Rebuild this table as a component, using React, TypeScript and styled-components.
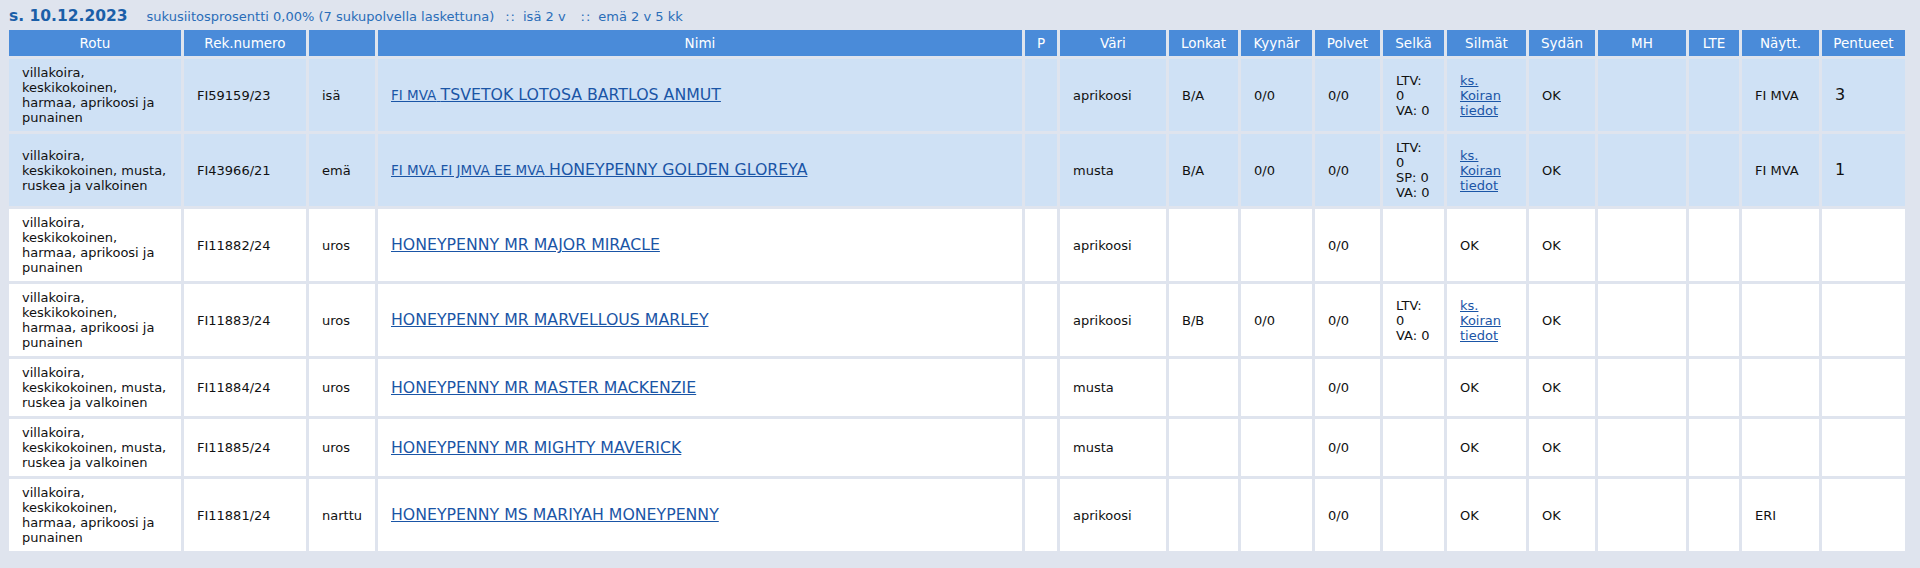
import React from "react";
import styled, { createGlobalStyle } from "styled-components";

interface Dog {
  rotu: string;
  rek: string;
  rooli: string;
  titles?: string;
  nimi: string;
  p?: string;
  vari: string;
  lonkat?: string;
  kyynar?: string;
  polvet?: string;
  selka?: string[];
  silmat?: string;
  silmatLink?: boolean;
  sydan?: string;
  mh?: string;
  lte?: string;
  naytt?: string;
  pentueet?: string;
  parent?: boolean;
}

const HARMAA = "villakoira, keskikokoinen, harmaa, aprikoosi ja punainen";
const MUSTA = "villakoira, keskikokoinen, musta, ruskea ja valkoinen";

const dogs: Dog[] = [
  {
    rotu: HARMAA,
    rek: "FI59159/23",
    rooli: "isä",
    titles: "FI MVA",
    nimi: "TSVETOK LOTOSA BARTLOS ANMUT",
    vari: "aprikoosi",
    lonkat: "B/A",
    kyynar: "0/0",
    polvet: "0/0",
    selka: ["LTV:", "0", "VA: 0"],
    silmatLink: true,
    sydan: "OK",
    naytt: "FI MVA",
    pentueet: "3",
    parent: true,
  },
  {
    rotu: MUSTA,
    rek: "FI43966/21",
    rooli: "emä",
    titles: "FI MVA FI JMVA EE MVA",
    nimi: "HONEYPENNY GOLDEN GLOREYA",
    vari: "musta",
    lonkat: "B/A",
    kyynar: "0/0",
    polvet: "0/0",
    selka: ["LTV:", "0", "SP: 0", "VA: 0"],
    silmatLink: true,
    sydan: "OK",
    naytt: "FI MVA",
    pentueet: "1",
    parent: true,
  },
  {
    rotu: HARMAA,
    rek: "FI11882/24",
    rooli: "uros",
    nimi: "HONEYPENNY MR MAJOR MIRACLE",
    vari: "aprikoosi",
    polvet: "0/0",
    silmat: "OK",
    sydan: "OK",
  },
  {
    rotu: HARMAA,
    rek: "FI11883/24",
    rooli: "uros",
    nimi: "HONEYPENNY MR MARVELLOUS MARLEY",
    vari: "aprikoosi",
    lonkat: "B/B",
    kyynar: "0/0",
    polvet: "0/0",
    selka: ["LTV:", "0", "VA: 0"],
    silmatLink: true,
    sydan: "OK",
  },
  {
    rotu: MUSTA,
    rek: "FI11884/24",
    rooli: "uros",
    nimi: "HONEYPENNY MR MASTER MACKENZIE",
    vari: "musta",
    polvet: "0/0",
    silmat: "OK",
    sydan: "OK",
  },
  {
    rotu: MUSTA,
    rek: "FI11885/24",
    rooli: "uros",
    nimi: "HONEYPENNY MR MIGHTY MAVERICK",
    vari: "musta",
    polvet: "0/0",
    silmat: "OK",
    sydan: "OK",
  },
  {
    rotu: HARMAA,
    rek: "FI11881/24",
    rooli: "narttu",
    nimi: "HONEYPENNY MS MARIYAH MONEYPENNY",
    vari: "aprikoosi",
    polvet: "0/0",
    silmat: "OK",
    sydan: "OK",
    naytt: "ERI",
  },
];

const columns: { title: string; width: number }[] = [
  { title: "Rotu", width: 172 },
  { title: "Rek.numero", width: 122 },
  { title: "", width: 66 },
  { title: "Nimi", width: 644 },
  { title: "P", width: 32 },
  { title: "Väri", width: 106 },
  { title: "Lonkat", width: 69 },
  { title: "Kyynär", width: 71 },
  { title: "Polvet", width: 65 },
  { title: "Selkä", width: 61 },
  { title: "Silmät", width: 79 },
  { title: "Sydän", width: 66 },
  { title: "MH", width: 88 },
  { title: "LTE", width: 50 },
  { title: "Näytt.", width: 77 },
  { title: "Pentueet", width: 83 },
];

const App: React.FC = () => {
  return (
    <Page>
      <GlobalStyle />
      <TitleBar>
        <DateTitle>s. 10.12.2023</DateTitle>
        <Info>
          sukusiitosprosentti 0,00% (7 sukupolvella laskettuna)
          <Sep $before={11}>::</Sep>isä 2 v<Sep $before={15}>::</Sep>emä 2 v 5 kk
        </Info>
      </TitleBar>

      <Table>
        <colgroup>
          {columns.map((c, i) => (
            <Col key={i} $w={c.width} />
          ))}
        </colgroup>
        <thead>
          <tr>
            {columns.map((c, i) => (
              <Th key={i}>{c.title}</Th>
            ))}
          </tr>
        </thead>
        <tbody>
          {dogs.map((d) => (
            <tr key={d.rek}>
              <Td $parent={d.parent}>{d.rotu}</Td>
              <Td $parent={d.parent}>{d.rek}</Td>
              <Td $parent={d.parent}>{d.rooli}</Td>
              <Td $parent={d.parent}>
                <NameLink href="#">
                  {d.titles && <Titles>{d.titles} </Titles>}
                  {d.nimi}
                </NameLink>
              </Td>
              <Td $parent={d.parent}>{d.p}</Td>
              <Td $parent={d.parent}>{d.vari}</Td>
              <Td $parent={d.parent}>{d.lonkat}</Td>
              <Td $parent={d.parent}>{d.kyynar}</Td>
              <Td $parent={d.parent}>{d.polvet}</Td>
              <Td $parent={d.parent}>
                {d.selka?.map((line, i) => (
                  <Line key={i}>{line}</Line>
                ))}
              </Td>
              <Td $parent={d.parent}>
                {d.silmatLink ? (
                  <SmallLink href="#">
                    <Line>ks.</Line>
                    <Line>Koiran</Line>
                    <Line>tiedot</Line>
                  </SmallLink>
                ) : (
                  d.silmat
                )}
              </Td>
              <Td $parent={d.parent}>{d.sydan}</Td>
              <Td $parent={d.parent}>{d.mh}</Td>
              <Td $parent={d.parent}>{d.lte}</Td>
              <Td $parent={d.parent}>{d.naytt}</Td>
              <Td $parent={d.parent}>
                <Count>{d.pentueet}</Count>
              </Td>
            </tr>
          ))}
        </tbody>
      </Table>
    </Page>
  );
};

const GlobalStyle = createGlobalStyle`
  html, body {
    margin: 0;
    padding: 0;
    background: #dfe4ee;
  }
  body {
    font-family: "DejaVu Sans", Verdana, sans-serif;
    font-size: 13px;
    color: #111;
  }
`;

const Page = styled.div`
  min-height: 568px;
  padding: 0 6px;
  background: #dfe4ee;
  box-sizing: border-box;
`;

const TitleBar = styled.div`
  display: flex;
  align-items: baseline;
  gap: 19px;
  padding: 6px 0 0 3px;
  height: 27px;
  box-sizing: border-box;
  line-height: 21px;
`;

const DateTitle = styled.span`
  font-size: 15.5px;
  font-weight: bold;
  color: #1b5fa8;
`;

const Info = styled.span`
  font-size: 13px;
  color: #2a6db8;
`;

const Sep = styled.span<{ $before: number }>`
  margin: 0 7px 0 ${(p) => p.$before}px;
  letter-spacing: 1px;
`;

const Table = styled.table`
  table-layout: fixed;
  width: 1902px;
  border-collapse: separate;
  border-spacing: 3px;
`;

const Col = styled.col<{ $w: number }>`
  width: ${(p) => p.$w}px;
`;

const Th = styled.th`
  background: #4a8bd9;
  color: #ffffff;
  font-weight: normal;
  font-size: 13.5px;
  line-height: 16px;
  padding: 5px 2px;
  text-align: center;
  white-space: nowrap;
  overflow: hidden;
`;

const Td = styled.td<{ $parent?: boolean }>`
  background: ${(p) => (p.$parent ? "#cfe1f5" : "#ffffff")};
  font-size: 13px;
  line-height: 15px;
  padding: 6px 10px 6px 13px;
  vertical-align: middle;
  text-align: left;
  word-wrap: break-word;
`;

const Line = styled.span`
  display: block;
  white-space: nowrap;
`;

const NameLink = styled.a`
  color: #1a55a6;
  font-size: 15.75px;
  text-decoration: underline;
  white-space: nowrap;
`;

const Titles = styled.span`
  font-size: 13.5px;
`;

const SmallLink = styled.a`
  color: #1a55a6;
  text-decoration: underline;
`;

const Count = styled.span`
  font-size: 16px;
`;

export default App;
